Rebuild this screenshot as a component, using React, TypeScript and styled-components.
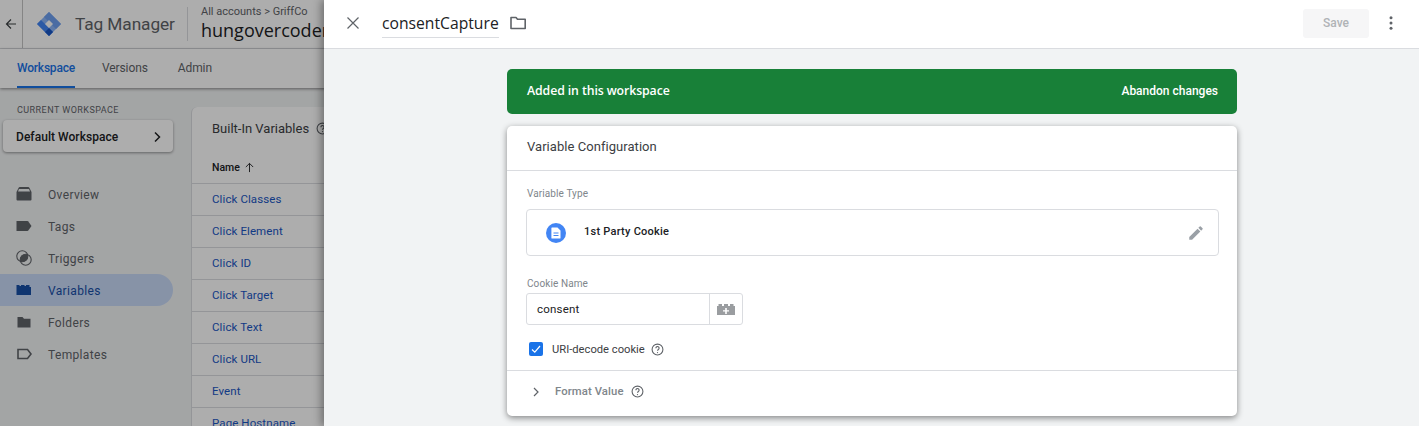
import * as React from "react";
import styled, { createGlobalStyle } from "styled-components";

const GlobalStyle = createGlobalStyle`
  html, body {
    margin: 0;
    padding: 0;
    background: #f1f3f4;
    font-family: Roboto, "Liberation Sans", sans-serif;
  }
`;

const Page = styled.div`
  position: relative;
  width: 1419px;
  height: 426px;
  overflow: hidden;
  background: #f1f3f4;
`;

/* ---- page behind the drawer ---- */

const TopBar = styled.div`
  display: flex;
  align-items: center;
  height: 48px;
  background: #fff;
  border-bottom: 1px solid #dadce0;
`;

const BackCell = styled.div`
  display: flex;
  align-items: center;
  justify-content: center;
  width: 22px;
  height: 48px;
  border-right: 1px solid #c4c4c4;
  color: #3c4043;
`;

const Logo = styled.svg`
  width: 26px;
  height: 26px;
  margin: -1px 0 0 13px;
`;

const Product = styled.div`
  margin-left: 13px;
  width: 112px;
  font-size: 17.300px;
  letter-spacing: -0.1px;
  color: #5f6368;
`;

const Account = styled.div`
  padding-left: 13px;
  border-left: 1px solid #dadce0;
  height: 34px;
  color: #202124;
`;

const Crumb = styled.div`
  font-size: 11px;
  line-height: 12px;
  margin-top: -1px;
  color: #5f6368;
`;

const ContainerName = styled.div`
  font-family: "Open Sans", sans-serif;
  font-size: 18px;
  line-height: 24px;
  white-space: nowrap;
`;

const Tabs = styled.div`
  position: relative;
  display: flex;
  height: 39px;
  padding-left: 17px;
  background: #fff;
  box-shadow: 0 1px 3px rgba(0, 0, 0, 0.45);
`;

const Tab = styled.div<{ $active?: boolean; $gap: number }>`
  height: 37px;
  margin-right: ${(p) => p.$gap}px;
  line-height: 38px;
  font-size: 12px;
  font-weight: ${(p) => (p.$active ? 500 : 400)};
  letter-spacing: ${(p) => (p.$active ? "-0.2px" : "-0.1px")};
  color: ${(p) => (p.$active ? "#1a73e8" : "#5f6368")};
  border-bottom: 2px solid ${(p) => (p.$active ? "#1a73e8" : "transparent")};
`;

const Body = styled.div`
  display: flex;
  height: 338px;
`;

const Sidebar = styled.div`
  flex: none;
  width: 191px;
  padding-top: 16px;
`;

const SideLabel = styled.div`
  padding-left: 17px;
  font-size: 9px;
  line-height: 12px;
  letter-spacing: 0.45px;
  color: #5f6368;
`;

const WorkspaceButton = styled.div`
  display: flex;
  align-items: center;
  justify-content: space-between;
  box-sizing: border-box;
  width: 170px;
  height: 32px;
  margin: 4px 0 26px 3px;
  padding: 1px 11px 0 13px;
  background: #fff;
  border-radius: 4px;
  box-shadow: 0 1px 3px rgba(0, 0, 0, 0.4);
  font-size: 12px;
  font-weight: 500;
  letter-spacing: 0.05px;
  color: #202124;
`;

const NavItem = styled.div<{ $active?: boolean }>`
  display: flex;
  align-items: center;
  gap: 16px;
  box-sizing: border-box;
  width: 173px;
  height: 32px;
  padding: 1px 0 0 16px;
  border-radius: 0 16px 16px 0;
  font-size: 12px;
  font-weight: 400;
  letter-spacing: 0.35px;
  color: ${(p) => (p.$active ? "#174ea6" : "#5f6368")};
  background: ${(p) => (p.$active ? "#c7d9f7" : "transparent")};
`;

const NavIcon = styled.svg`
  flex: none;
  width: 16px;
  height: 16px;
  margin-top: -1px;
`;

const ListCard = styled.div`
  flex: 1;
  margin-top: 19px;
  background: #fff;
  border-left: 1px solid #dadce0;
  border-radius: 6px 0 0 0;
`;

const ListTitle = styled.div`
  display: flex;
  align-items: center;
  gap: 7px;
  height: 42px;
  padding-left: 20px;
  font-size: 13px;
  color: #3c4043;
`;

const ListHead = styled.div`
  display: flex;
  align-items: center;
  gap: 4px;
  height: 34px;
  padding: 2px 0 0 20px;
  box-sizing: border-box;
  font-size: 10.500px;
  font-weight: 500;
  color: #202124;
`;

const ListRow = styled.div`
  box-sizing: border-box;
  height: 32px;
  padding-left: 20px;
  border-top: 1px solid #dadce0;
  font-size: 11.500px;
  line-height: 30px;
  letter-spacing: 0.1px;
  color: #1a56c4;
`;

/* ---- overlays ---- */

const Scrim = styled.div`
  position: absolute;
  inset: 0;
  background: rgba(0, 0, 0, 0.32);
`;

const Drawer = styled.div`
  position: absolute;
  top: 0;
  right: 0;
  bottom: 0;
  width: 1095px;
  background: #f1f3f4;
  box-shadow: -3px 0 8px rgba(0, 0, 0, 0.35);
`;

const DrawerBar = styled.div`
  display: flex;
  align-items: center;
  box-sizing: border-box;
  height: 49px;
  padding: 0 20px 2px 22px;
  background: #fff;
  border-bottom: 1px solid #dadce0;
`;

const CloseIcon = styled.svg`
  width: 14px;
  height: 14px;
  color: #5f6368;
`;

const NameField = styled.div`
  margin-left: 22px;
  height: 30px;
  box-sizing: border-box;
  padding-top: 1px;
  line-height: 28px;
  border-bottom: 1px solid #dadce0;
  font-family: "Open Sans", sans-serif;
  font-size: 15.700px;
  color: #202124;
`;

const FolderIcon = styled.svg`
  width: 18px;
  height: 18px;
  margin-left: 10px;
  color: #5f6368;
`;

const SaveButton = styled.div`
  width: 66px;
  height: 29px;
  margin-left: auto;
  background: #f6f6f7;
  border-radius: 3px;
  text-align: center;
  line-height: 29px;
  font-size: 12px;
  font-weight: 500;
  color: #b0b3b6;
`;

const MoreIcon = styled.svg`
  width: 16px;
  height: 16px;
  margin-left: 14px;
  color: #5f6368;
`;

const Content = styled.div`
  width: 730px;
  margin: 20px 0 0 183px;
`;

const Banner = styled.div`
  display: flex;
  align-items: center;
  justify-content: space-between;
  box-sizing: border-box;
  height: 45px;
  padding: 0 19px 2px 20px;
  background: #188038;
  border-radius: 5px;
  color: #fff;
`;

const BannerTitle = styled.div`
  font-family: "Open Sans", sans-serif;
  font-size: 12.300px;
  font-weight: 600;
  letter-spacing: -0.1px;
`;

const BannerAction = styled.div`
  font-size: 12px;
  font-weight: 500;
`;

const Card = styled.div`
  margin-top: 12px;
  height: 290px;
  background: #fff;
  border-radius: 5px;
  box-shadow: 0 2px 6px rgba(0, 0, 0, 0.45);
`;

const CardTitle = styled.div`
  box-sizing: border-box;
  height: 45px;
  padding-left: 20px;
  border-bottom: 1px solid #dadce0;
  font-size: 13px;
  line-height: 41px;
  letter-spacing: 0.05px;
  color: #3c4043;
`;

const CardBody = styled.div`
  padding: 17px 18px 0 19px;
`;

const FieldLabel = styled.div`
  padding-left: 1px;
  font-size: 10px;
  line-height: 12px;
  letter-spacing: 0.1px;
  color: #80868b;
`;

const TypeBox = styled.div`
  display: flex;
  align-items: center;
  box-sizing: border-box;
  height: 47px;
  margin-top: 9px;
  padding: 0 13px 0 19px;
  border: 1px solid #dadce0;
  border-radius: 4px;
`;

const TypeBadge = styled.svg`
  width: 20px;
  height: 20px;
`;

const TypeName = styled.div`
  margin: 0 0 3px 18px;
  font-size: 11px;
  font-weight: 500;
  letter-spacing: 0.25px;
  color: #202124;
`;

const PencilIcon = styled.svg`
  width: 18px;
  height: 18px;
  margin-left: auto;
  color: #9aa0a6;
`;

const CookieLabel = styled(FieldLabel)`
  margin-top: 22px;
`;

const InputRow = styled.div`
  display: flex;
  box-sizing: border-box;
  width: 217px;
  height: 32px;
  margin-top: 3px;
  border: 1px solid #dadce0;
  border-radius: 3px;
`;

const InputText = styled.div`
  flex: 1;
  padding-left: 10px;
  border-right: 1px solid #dadce0;
  font-size: 11.500px;
  line-height: 30px;
  letter-spacing: 0.2px;
  color: #202124;
`;

const PickerCell = styled.div`
  display: flex;
  align-items: center;
  justify-content: center;
  width: 32px;
`;

const PickerIcon = styled.svg`
  width: 20px;
  height: 20px;
  color: #9a9da0;
`;

const CheckRow = styled.div`
  display: flex;
  align-items: center;
  height: 18px;
  margin: 15px 0 0 3px;
  font-size: 11.200px;
  color: #3c4043;
`;

const CheckBox = styled.div`
  display: flex;
  align-items: center;
  justify-content: center;
  width: 14px;
  height: 14px;
  margin-right: 9px;
  background: #1a73e8;
  border-radius: 2px;
`;

const HelpIcon = styled.svg<{ $gap: number }>`
  flex: none;
  width: 13px;
  height: 13px;
  margin-left: ${(p) => p.$gap}px;
  color: #5f6368;
`;

const FormatRow = styled.div`
  display: flex;
  align-items: center;
  box-sizing: border-box;
  height: 45px;
  margin-top: 12px;
  padding: 0 0 3px 23px;
  border-top: 1px solid #dadce0;
  font-size: 11.300px;
  font-weight: 500;
  letter-spacing: 0.1px;
  color: #80868b;
`;

const ChevronIcon = styled.svg`
  width: 12px;
  height: 12px;
  margin-right: 13px;
  color: #5f6368;
`;

/* ---- drawings ---- */

const Help = ({ gap }: { gap: number }) => (
  <HelpIcon $gap={gap} viewBox="0 0 24 24" fill="none" stroke="currentColor">
    <circle cx="12" cy="12" r="10" strokeWidth="2" />
    <path d="M9 9.500a3 3 0 1 1 4.600 2.500c-1 .7-1.600 1.300-1.600 2.500" strokeWidth="2" />
    <circle cx="12" cy="17.600" r="1.200" fill="currentColor" stroke="none" />
  </HelpIcon>
);

const navIcons: Record<string, React.ReactNode> = {
  Overview: (
    <path d="M4 1h8a1.500 1.500 0 0 1 1.500 1L15.500 6v7.500a1 1 0 0 1-1 1h-13a1 1 0 0 1-1-1V6L2.500 2A1.500 1.500 0 0 1 4 1zM2 5.500h12L13 3H3z" fillRule="evenodd" fill="currentColor" />
  ),
  Tags: <path d="M.5 3h11a1 1 0 0 1 .8.4L15.500 8l-3.200 4.600a1 1 0 0 1-.8.4H.5z" fill="currentColor" />,
  Triggers: (
    <>
      <circle cx="6.300" cy="6.300" r="5.500" fill="none" stroke="currentColor" strokeWidth="1.100" />
      <circle cx="9.700" cy="9.700" r="5.500" fill="none" stroke="currentColor" strokeWidth="1.100" />
      <path d="M11.500 4.500A5.500 5.500 0 0 0 4.500 11.500A5.500 5.500 0 0 0 11.500 4.500z" fill="currentColor" />
    </>
  ),
  Variables: (
    <path d="M.5 5V3h3v1h1.500V3h3.500v1h1.500V3h3.500v2h1.500v8H.5z" fill="currentColor" />
  ),
  Folders: <path d="M1.500 3h5l1.500 1.800h6.500v8.700H1.500z" fill="currentColor" />,
  Templates: (
    <path d="M2 3.500h9.500L15 8l-3.500 4.500H2z" fill="none" stroke="currentColor" strokeWidth="1.600" />
  ),
};

const navItems = ["Overview", "Tags", "Triggers", "Variables", "Folders", "Templates"];
const rows = [
  "Click Classes",
  "Click Element",
  "Click ID",
  "Click Target",
  "Click Text",
  "Click URL",
  "Event",
  "Page Hostname",
];

const App = () => {
  return (
    <Page>
      <GlobalStyle />
      <TopBar>
        <BackCell>
          <svg width="12" height="12" viewBox="0 0 12 12" fill="none" stroke="currentColor" strokeWidth="1.200">
            <path d="M11 6H1.500M6 1.500 1.500 6 6 10.500" />
          </svg>
        </BackCell>
        <Logo viewBox="0 0 26 26">
          <path d="M13 1 25 13 13 25 1 13z" fill="#8ab4f8" />
          <path d="M13 1 25 13l-5 5L8 6z" fill="#6ea0f0" />
          <path d="M1 13 13 25l4-4L5 9z" fill="#4285f4" />
          <path d="M13 25l4-4-4-4-4 4z" fill="#1a56c4" />
          <path d="M13 9l4 4-4 4-4-4z" fill="#fff" />
        </Logo>
        <Product>Tag Manager</Product>
        <Account>
          <Crumb>All accounts &gt; GriffCo</Crumb>
          <ContainerName>hungovercoder</ContainerName>
        </Account>
      </TopBar>
      <Tabs>
        <Tab $active $gap={27}>Workspace</Tab>
        <Tab $gap={30}>Versions</Tab>
        <Tab $gap={0}>Admin</Tab>
      </Tabs>
      <Body>
        <Sidebar>
          <SideLabel>CURRENT WORKSPACE</SideLabel>
          <WorkspaceButton>
            Default Workspace
            <svg width="10" height="12" viewBox="0 0 10 12" fill="none" stroke="currentColor" strokeWidth="1.500">
              <path d="M3 1.500 7.500 6 3 10.500" />
            </svg>
          </WorkspaceButton>
          {navItems.map((name) => (
            <NavItem key={name} $active={name === "Variables"}>
              <NavIcon viewBox="0 0 16 16">{navIcons[name]}</NavIcon>
              {name}
            </NavItem>
          ))}
        </Sidebar>
        <ListCard>
          <ListTitle>
            Built-In Variables
            <Help gap={0} />
          </ListTitle>
          <ListHead>
            Name
            <svg width="11" height="11" viewBox="0 0 12 12" fill="none" stroke="currentColor" strokeWidth="1">
              <path d="M6 11V1.500M2 5.500l4-4 4 4" />
            </svg>
          </ListHead>
          {rows.map((row) => (
            <ListRow key={row}>{row}</ListRow>
          ))}
        </ListCard>
      </Body>

      <Scrim />

      <Drawer>
        <DrawerBar>
          <CloseIcon viewBox="0 0 14 14" fill="none" stroke="currentColor" strokeWidth="1.200">
            <path d="M1.500 1.500l11 11M12.500 1.500l-11 11" />
          </CloseIcon>
          <NameField>consentCapture</NameField>
          <FolderIcon viewBox="0 0 18 18" fill="none" stroke="currentColor" strokeWidth="1.600">
            <path d="M2 3.500h5l1.500 1.800h7.700v9.200H2z" strokeLinejoin="round" />
          </FolderIcon>
          <SaveButton>Save</SaveButton>
          <MoreIcon viewBox="0 0 16 16" fill="currentColor">
            <circle cx="8" cy="2.800" r="1.500" />
            <circle cx="8" cy="8" r="1.500" />
            <circle cx="8" cy="13.200" r="1.500" />
          </MoreIcon>
        </DrawerBar>
        <Content>
          <Banner>
            <BannerTitle>Added in this workspace</BannerTitle>
            <BannerAction>Abandon changes</BannerAction>
          </Banner>
          <Card>
            <CardTitle>Variable Configuration</CardTitle>
            <CardBody>
              <FieldLabel>Variable Type</FieldLabel>
              <TypeBox>
                <TypeBadge viewBox="0 0 20 20">
                  <circle cx="10" cy="10" r="10" fill="#4285f4" />
                  <path d="M6 4.500h5.500L14.500 7.500V15a.6.6 0 0 1-.6.6H6a.6.6 0 0 1-.6-.6V5a.6.6 0 0 1 .6-.5z" fill="#fff" />
                  <path d="M7.500 10h5M7.500 12.500h5" stroke="#4285f4" strokeWidth="1" />
                </TypeBadge>
                <TypeName>1st Party Cookie</TypeName>
                <PencilIcon viewBox="0 0 24 24" fill="currentColor">
                  <path d="M3 17.250V21h3.750L17.810 9.940l-3.750-3.750L3 17.250zM20.710 7.040a1 1 0 0 0 0-1.410l-2.340-2.340a1 1 0 0 0-1.410 0l-1.830 1.830 3.750 3.750 1.830-1.830z" />
                </PencilIcon>
              </TypeBox>
              <CookieLabel>Cookie Name</CookieLabel>
              <InputRow>
                <InputText>consent</InputText>
                <PickerCell>
                  <PickerIcon viewBox="0 0 20 20" fill="currentColor">
                    <path fillRule="evenodd" d="M1 7h1.500V5H6v2h2V5h4v2h2V5h3.500v2H19v9H1zM9.200 9v2.200H7v1.400h2.200V15h1.600v-2.400H13v-1.400h-2.200V9z" />
                  </PickerIcon>
                </PickerCell>
              </InputRow>
              <CheckRow>
                <CheckBox>
                  <svg width="12" height="12" viewBox="0 0 12 12" fill="none" stroke="#fff" strokeWidth="1.200">
                    <path d="M2 6.500 4.800 9.200 10 3" />
                  </svg>
                </CheckBox>
                URI-decode cookie
                <Help gap={6} />
              </CheckRow>
            </CardBody>
            <FormatRow>
              <ChevronIcon viewBox="0 0 12 12" fill="none" stroke="currentColor" strokeWidth="1.200">
                <path d="M4 2l4 4-4 4" />
              </ChevronIcon>
              Format Value
              <Help gap={7} />
            </FormatRow>
          </Card>
        </Content>
      </Drawer>
    </Page>
  );
};

export default App;
